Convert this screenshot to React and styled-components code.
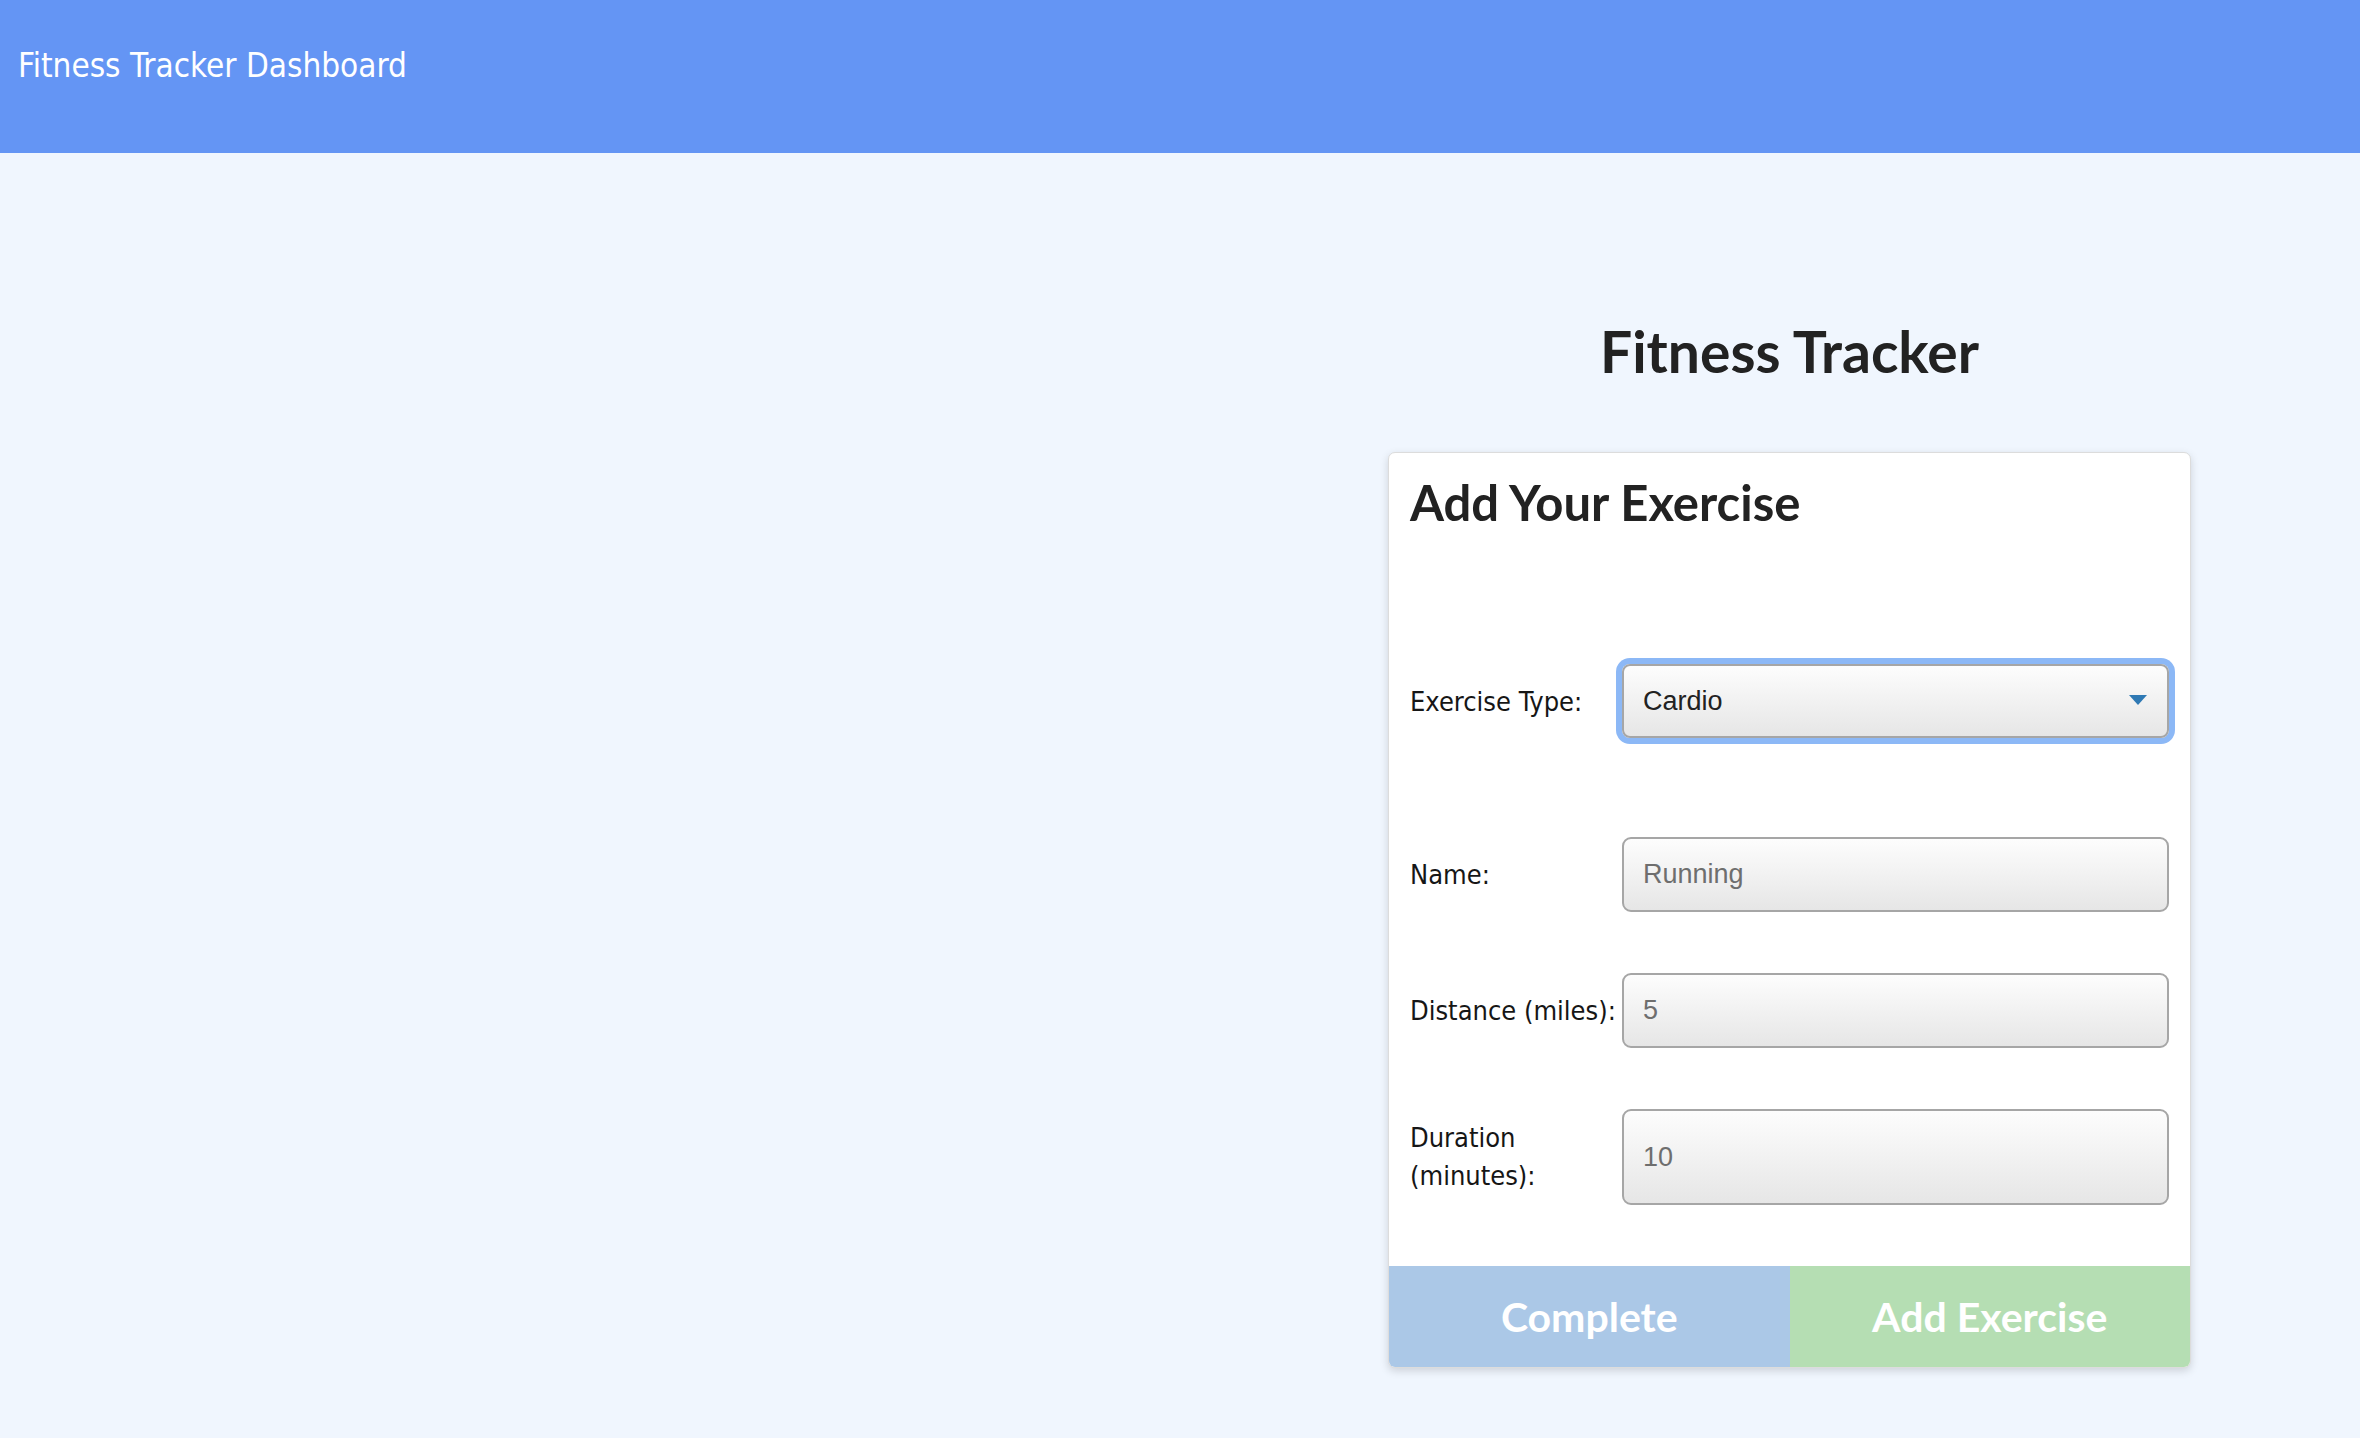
import React, { useState } from "react";
import styled, { createGlobalStyle } from "styled-components";

const GlobalStyle = createGlobalStyle`
  html, body {
    margin: 0;
    padding: 0;
    background: #f0f6fe;
    font-family: "DejaVu Sans Condensed", "Liberation Sans", sans-serif;
  }
`;

const EXERCISE_TYPES = ["Cardio", "Resistance"];

const App = () => {
  const [type, setType] = useState("Cardio");

  return (
    <>
      <GlobalStyle />
      <Header>
        <HeaderTitle>Fitness Tracker Dashboard</HeaderTitle>
      </Header>
      <Main>
        <Column>
          <Title>Fitness Tracker</Title>
          <Card>
            <CardBody>
              <CardTitle>Add Your Exercise</CardTitle>
              <Form>
                <Row>
                  <Label htmlFor="type">Exercise Type:</Label>
                  <SelectWrap>
                    <Select
                      id="type"
                      value={type}
                      onChange={e => setType(e.target.value)}
                    >
                      {EXERCISE_TYPES.map(t => (
                        <option key={t}>{t}</option>
                      ))}
                    </Select>
                    <Arrow viewBox="0 0 18 10">
                      <path d="M0 0 H18 L9 10 Z" fill="#2f79b4" />
                    </Arrow>
                  </SelectWrap>
                </Row>
                <Row $spaced>
                  <Label htmlFor="name">Name:</Label>
                  <Input id="name" placeholder="Running" />
                </Row>
                <Row>
                  <Label htmlFor="distance">Distance (miles):</Label>
                  <Input id="distance" placeholder="5" />
                </Row>
                <Row>
                  <Label htmlFor="duration">Duration (minutes):</Label>
                  <Input id="duration" placeholder="10" />
                </Row>
              </Form>
            </CardBody>
            <Actions>
              <ActionButton $color="#abc8e7">Complete</ActionButton>
              <ActionButton $color="#b5deb3">Add Exercise</ActionButton>
            </Actions>
          </Card>
        </Column>
      </Main>
    </>
  );
};

export default App;

const Header = styled.header`
  height: 153px;
  box-sizing: border-box;
  background: #6495f4;
  padding: 47px 18px 0;
`;

const HeaderTitle = styled.div`
  color: #fff;
  font-size: 33px;
  line-height: 38px;
`;

const Main = styled.main`
  display: flex;
  justify-content: flex-end;
  padding: 0 169px 40px 0;
`;

const Column = styled.div`
  width: 803px;
  display: flex;
  flex-direction: column;
`;

const Title = styled.h1`
  margin: 156px 0 0;
  height: 143px;
  text-align: center;
  font-family: Lato, sans-serif;
  font-weight: 700;
  font-size: 57px;
  line-height: 84px;
  color: #222;
`;

const Card = styled.section`
  background: #fff;
  border: 1px solid #dcdcdc;
  border-radius: 7px;
  box-shadow: 0 3px 8px rgba(0, 0, 0, 0.15);
  overflow: hidden;
`;

const CardBody = styled.div`
  padding: 20px 21px 61px;
`;

const CardTitle = styled.h2`
  margin: 0;
  font-family: Lato, sans-serif;
  font-weight: 700;
  font-size: 49px;
  line-height: 58px;
  color: #222;
`;

const Form = styled.form`
  display: flex;
  flex-direction: column;
  gap: 61px;
  padding-top: 133px;
`;

const Row = styled.div`
  display: flex;
  align-items: stretch;
  min-height: 75px;
  margin-top: ${({ $spaced }) => ($spaced ? "37px" : "0")};
`;

const Label = styled.label`
  flex: 0 0 212px;
  display: flex;
  align-items: center;
  padding: 10px 0;
  font-size: 27px;
  line-height: 38px;
  color: #161616;
`;

const fieldStyles = `
  flex: 1;
  box-sizing: border-box;
  margin: 0;
  border: 2px solid #a6a6a6;
  border-radius: 9px;
  background: linear-gradient(#fdfdfd, #e6e6e6);
  font-family: "Liberation Sans", Arial, sans-serif;
  font-size: 27px;
  padding: 0 19px;
  outline: none;
`;

const SelectWrap = styled.div`
  flex: 1;
  position: relative;
  display: flex;
`;

const Select = styled.select`
  ${fieldStyles}
  appearance: none;
  height: 74px;
  color: #222;
  box-shadow: 0 0 0 6px #8cb8f6;
  border-radius: 8px;
`;

const Arrow = styled.svg`
  position: absolute;
  right: 22px;
  top: 31px;
  width: 18px;
  height: 10px;
  pointer-events: none;
`;

const Input = styled.input`
  ${fieldStyles}
  color: #555;

  &::placeholder {
    color: #6e6e6e;
  }
`;

const Actions = styled.div`
  display: grid;
  grid-template-columns: 1fr 1fr;
`;

const ActionButton = styled.button`
  height: 101px;
  border: none;
  background: ${({ $color }) => $color};
  color: #fff;
  font-family: Lato, sans-serif;
  font-weight: 700;
  font-size: 41px;
  cursor: pointer;
`;
